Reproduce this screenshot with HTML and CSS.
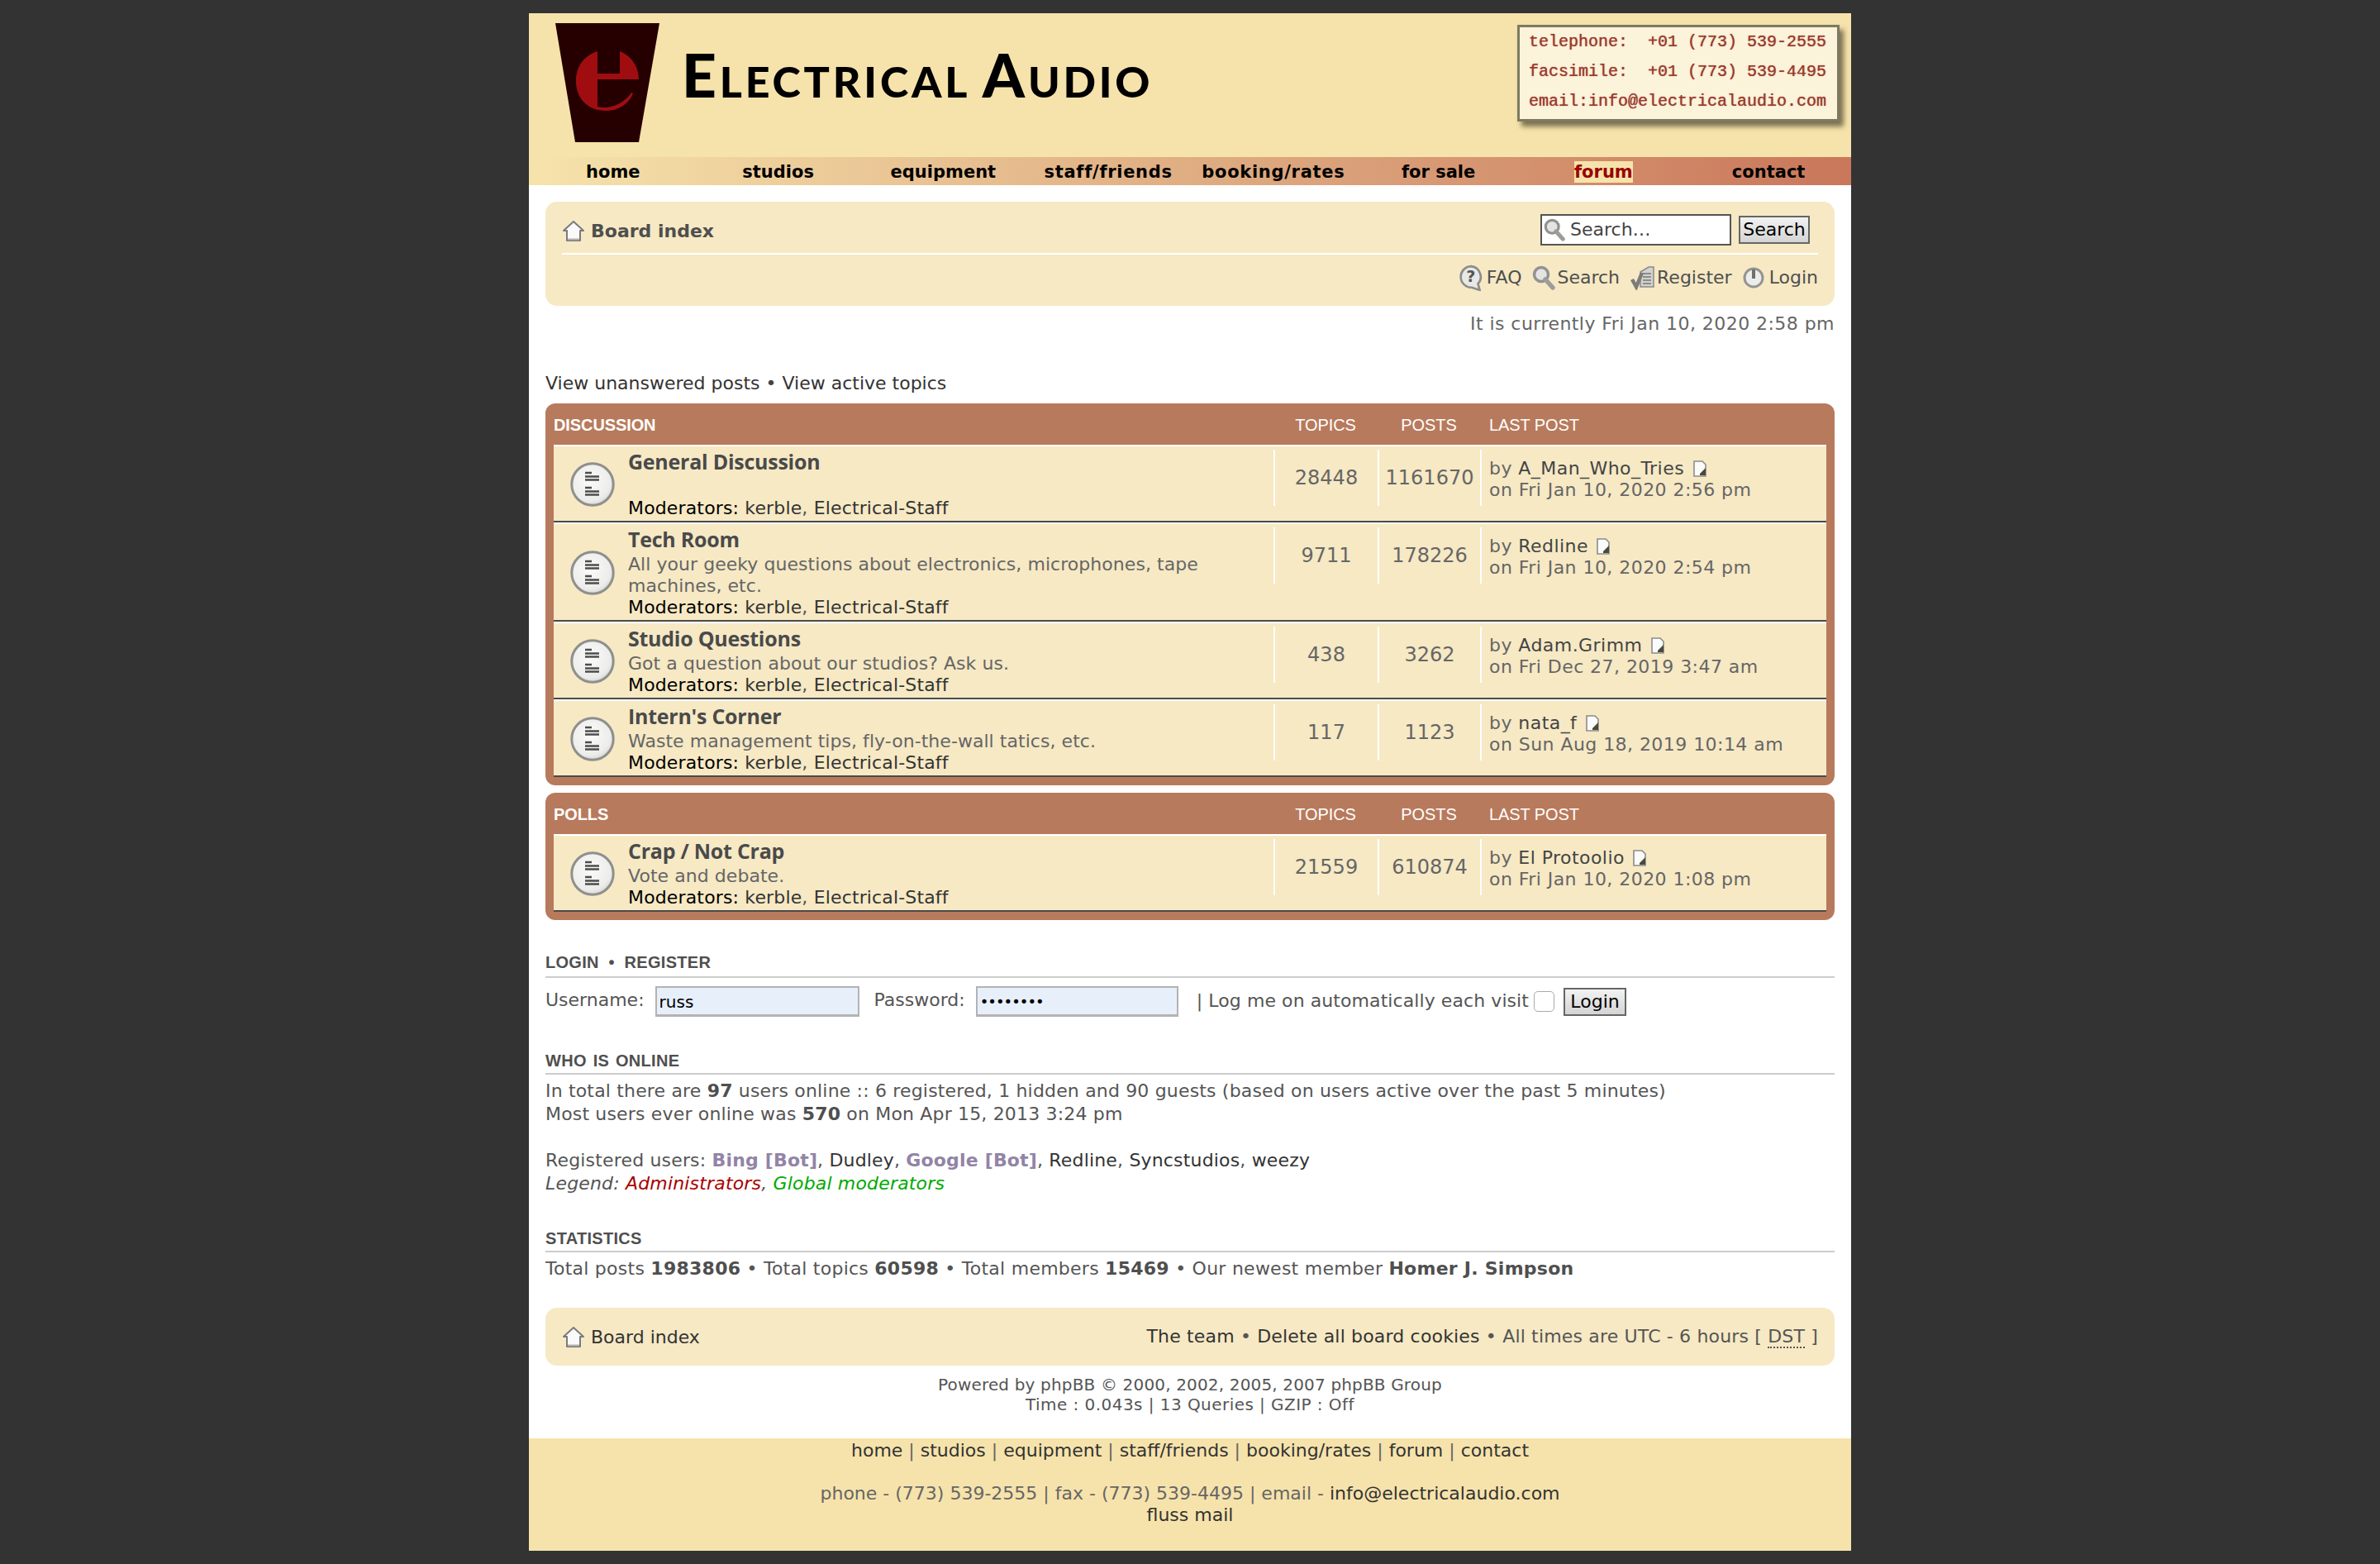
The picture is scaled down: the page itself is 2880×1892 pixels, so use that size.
FILE: index.html
```html
<!DOCTYPE html>
<html lang="en">
<head>
  <meta charset="UTF-8">
  <title>Electrical Audio - Board index</title>
  <link rel="stylesheet" href="styles.css">
</head>
<body>

  <!-- icons used more than once -->
  <svg class="defs" width="0" height="0">
    <defs>
      <radialGradient id="g-forum" cx="45%" cy="40%" r="65%">
        <stop offset="0" stop-color="#fbfbfb"/>
        <stop offset="0.75" stop-color="#ececea"/>
        <stop offset="1" stop-color="#cfcfcd"/>
      </radialGradient>
    </defs>
    <symbol id="i-forum" viewBox="0 0 54 54">
      <circle cx="27" cy="27" r="25.2" fill="url(#g-forum)" stroke="#8f8f8d" stroke-width="3"/>
      <path d="M18 13h8M18 17.5h17M18 21.5h17M18 31h8M18 35.5h17M18 39.5h17" stroke="#4d4d4d" stroke-width="2.4" fill="none"/>
    </symbol>
    <symbol id="i-home" viewBox="0 0 28 26">
      <path d="M14 1 L26 12 L22 12 L22 24 L6 24 L6 12 L2 12 Z" fill="#fafafa" stroke="#7b7b7b" stroke-width="2" stroke-linejoin="round"/>
      <path d="M7 22.5h14" stroke="#b5b5b5" stroke-width="2"/>
    </symbol>
    <symbol id="i-search" viewBox="0 0 28 30">
      <circle cx="11" cy="11" r="8.5" fill="#e4e4e2" stroke="#929290" stroke-width="3.5"/>
      <path d="M16 17 L25 27" stroke="#9c9c9a" stroke-width="5.5" stroke-linecap="round"/>
    </symbol>
    <symbol id="i-last" viewBox="0 0 18 20">
      <path d="M2 1h10l4 4v14H2z" fill="#fbfbfb" stroke="#8c8c8c" stroke-width="1.6"/>
      <path d="M9 16 L16 9 L16 18 L9 18 Z" fill="#4a4a3a"/>
    </symbol>
  </svg>

  <div class="wrap">

    <div class="site-head">
      <svg class="logo" viewBox="0 0 160 170" width="160" height="170">
        <path d="M12 8 H138 L113 152 H36 Z" fill="#260000"/>
        <path d="M63 42 C45 48 37 62 37 78 C37 98 50 114 74 114 C90 114 102 104 106 93 L104 92 C98 102 84 110 72 110 Q66 110 63 109 Z" fill="#a00d10"/>
        <path d="M90 42 C103 47 113 60 113 76 H63 V69 H90 Z" fill="#a00d10"/>
      </svg>
      <div class="site-name"><b>E</b>LECTRICAL <b>A</b>UDIO</div>
      <div class="contact-box">telephone:  +01 (773) 539-2555
facsimile:  +01 (773) 539-4495
email:info@electricalaudio.com</div>
    </div>

    <div class="site-nav">
      <a href="#">home</a>
      <a href="#">studios</a>
      <a href="#">equipment</a>
      <a class="wide" href="#">staff/friends</a>
      <a class="wide" href="#">booking/rates</a>
      <a href="#">for sale</a>
      <a href="#"><span class="current">forum</span></a>
      <a href="#">contact</a>
    </div>

    <div class="content">

      <div class="panel">
        <div class="panel-top">
          <div class="crumb">
            <svg width="28" height="26"><use href="#i-home"/></svg>
            <b>Board index</b>
          </div>
          <div class="search">
            <div class="search-box">
              <svg width="26" height="30"><use href="#i-search"/></svg>
              <span>Search…</span>
            </div>
            <button class="btn">Search</button>
          </div>
        </div>
        <div class="panel-links">
          <a href="#">
            <svg width="32" height="32" viewBox="0 0 30 30">
              <path d="M14 2 A12 12 0 1 0 15 26 L24 29 L22 22 A12 12 0 0 0 14 2 Z" fill="#e8e8e6" stroke="#8d8d8b" stroke-width="2.5"/>
              <text x="14" y="20" class="faq-mark">?</text>
            </svg>FAQ</a>
          <a href="#"><svg width="28" height="30"><use href="#i-search"/></svg>Search</a>
          <a href="#">
            <svg width="30" height="30" viewBox="0 0 30 30">
              <path d="M12 8 L22 2 H28 V26 H12 Z" fill="#d2d2cf" stroke="#8b8b89" stroke-width="1.5"/>
              <path d="M15 10h10M15 14h10M15 18h10M15 22h10" stroke="#777" stroke-width="1.4"/>
              <path d="M2 17 L7 26 L14 9" fill="none" stroke="#7c7c7a" stroke-width="4.5"/>
            </svg>Register</a>
          <a href="#">
            <svg class="power" width="26" height="30" viewBox="0 0 26 30">
              <circle cx="13" cy="15" r="11" fill="#ececea" stroke="#949492" stroke-width="3"/>
              <path d="M13 5v11" stroke="#6f6f6d" stroke-width="4"/>
            </svg>Login</a>
        </div>
      </div>

      <p class="now">It is currently Fri Jan 10, 2020 2:58 pm</p>
      <p class="quick"><a href="#">View unanswered posts</a> • <a href="#">View active topics</a></p>

      <div class="forabg">
        <div class="cols head">
          <div>DISCUSSION</div>
          <div class="num">TOPICS</div>
          <div class="num">POSTS</div>
          <div class="last">LAST POST</div>
        </div>

        <div class="row">
          <svg class="ficon" width="54" height="54"><use href="#i-forum"/></svg>
          <div class="forum">
            <a class="title" href="#">General Discussion</a>
            <div class="desc">&nbsp;</div>
            <div class="mods"><b>Moderators:</b> <a href="#">kerble</a>, <a href="#">Electrical-Staff</a></div>
          </div>
          <div class="stat">28448</div>
          <div class="stat">1161670</div>
          <div class="lastpost">
            <div>by <a href="#">A_Man_Who_Tries</a> <svg width="18" height="20"><use href="#i-last"/></svg></div>
            <div>on Fri Jan 10, 2020 2:56 pm</div>
          </div>
        </div>

        <div class="row">
          <svg class="ficon" width="54" height="54"><use href="#i-forum"/></svg>
          <div class="forum">
            <a class="title" href="#">Tech Room</a>
            <div class="desc">All your geeky questions about electronics, microphones, tape machines, etc.</div>
            <div class="mods"><b>Moderators:</b> <a href="#">kerble</a>, <a href="#">Electrical-Staff</a></div>
          </div>
          <div class="stat">9711</div>
          <div class="stat">178226</div>
          <div class="lastpost">
            <div>by <a href="#">Redline</a> <svg width="18" height="20"><use href="#i-last"/></svg></div>
            <div>on Fri Jan 10, 2020 2:54 pm</div>
          </div>
        </div>

        <div class="row">
          <svg class="ficon" width="54" height="54"><use href="#i-forum"/></svg>
          <div class="forum">
            <a class="title" href="#">Studio Questions</a>
            <div class="desc">Got a question about our studios? Ask us.</div>
            <div class="mods"><b>Moderators:</b> <a href="#">kerble</a>, <a href="#">Electrical-Staff</a></div>
          </div>
          <div class="stat">438</div>
          <div class="stat">3262</div>
          <div class="lastpost">
            <div>by <a href="#">Adam.Grimm</a> <svg width="18" height="20"><use href="#i-last"/></svg></div>
            <div>on Fri Dec 27, 2019 3:47 am</div>
          </div>
        </div>

        <div class="row">
          <svg class="ficon" width="54" height="54"><use href="#i-forum"/></svg>
          <div class="forum">
            <a class="title" href="#">Intern's Corner</a>
            <div class="desc">Waste management tips, fly-on-the-wall tatics, etc.</div>
            <div class="mods"><b>Moderators:</b> <a href="#">kerble</a>, <a href="#">Electrical-Staff</a></div>
          </div>
          <div class="stat">117</div>
          <div class="stat">1123</div>
          <div class="lastpost">
            <div>by <a href="#">nata_f</a> <svg width="18" height="20"><use href="#i-last"/></svg></div>
            <div>on Sun Aug 18, 2019 10:14 am</div>
          </div>
        </div>
      </div>

      <div class="forabg">
        <div class="cols head">
          <div>POLLS</div>
          <div class="num">TOPICS</div>
          <div class="num">POSTS</div>
          <div class="last">LAST POST</div>
        </div>
        <div class="row">
          <svg class="ficon" width="54" height="54"><use href="#i-forum"/></svg>
          <div class="forum">
            <a class="title" href="#">Crap / Not Crap</a>
            <div class="desc">Vote and debate.</div>
            <div class="mods"><b>Moderators:</b> <a href="#">kerble</a>, <a href="#">Electrical-Staff</a></div>
          </div>
          <div class="stat">21559</div>
          <div class="stat">610874</div>
          <div class="lastpost">
            <div>by <a href="#">El Protoolio</a> <svg width="18" height="20"><use href="#i-last"/></svg></div>
            <div>on Fri Jan 10, 2020 1:08 pm</div>
          </div>
        </div>
      </div>

      <h3 class="sec sec-login">LOGIN &nbsp;•&nbsp; REGISTER</h3>
      <div class="login">
        <label>Username:</label>
        <div class="field">russ</div>
        <label class="pw">Password:</label>
        <div class="field dots">••••••••</div>
        <span class="auto">| Log me on automatically each visit</span>
        <span class="check"></span>
        <button class="btn">Login</button>
      </div>

      <h3 class="sec sec-who">WHO IS ONLINE</h3>
      <p class="txt">In total there are <b>97</b> users online :: 6 registered, 1 hidden and 90 guests (based on users active over the past 5 minutes)<br>
      Most users ever online was <b>570</b> on Mon Apr 15, 2013 3:24 pm</p>
      <p class="txt gap">Registered users: <a class="bot" href="#">Bing [Bot]</a>, <a href="#">Dudley</a>, <a class="bot" href="#">Google [Bot]</a>, <a href="#">Redline</a>, <a href="#">Syncstudios</a>, <a href="#">weezy</a><br>
      <em>Legend: <a class="admin" href="#">Administrators</a>, <a class="gmod" href="#">Global moderators</a></em></p>

      <h3 class="sec sec-stats">STATISTICS</h3>
      <p class="txt totals">Total posts <b>1983806</b> • Total topics <b>60598</b> • Total members <b>15469</b> • Our newest member <b>Homer J. Simpson</b></p>

      <div class="panel panel-foot">
        <div class="crumb">
          <svg width="28" height="26"><use href="#i-home"/></svg>
          <a href="#">Board index</a>
        </div>
        <div class="foot-links"><a href="#">The team</a> • <a href="#">Delete all board cookies</a> • All times are UTC - 6 hours [ <abbr>DST</abbr> ]</div>
      </div>

      <div class="powered">Powered by phpBB © 2000, 2002, 2005, 2007 phpBB Group<br><span class="timing">Time : 0.043s | 13 Queries | GZIP : Off</span></div>
    </div>

    <div class="site-foot">
      <div><a href="#">home</a> | <a href="#">studios</a> | <a href="#">equipment</a> | <a href="#">staff/friends</a> | <a href="#">booking/rates</a> | <a href="#">forum</a> | <a href="#">contact</a></div>
      <br>
      <div>phone - (773) 539-2555 | fax - (773) 539-4495 | email - <a href="#">info@electricalaudio.com</a></div>
      <div><a href="#">fluss mail</a></div>
    </div>

  </div>

</body>
</html>
```

FILE: styles.css
```css
* { box-sizing: border-box; margin: 0; padding: 0; }

body {
  background: #333;
  font-family: "DejaVu Sans", Verdana, sans-serif;
  font-size: 22px;
  line-height: 26px;
  color: #555;
}

a { color: #333; text-decoration: none; }
svg { flex: none; }
.defs { position: absolute; }

.wrap {
  width: 1600px;
  margin: 16px auto;
  background: #fff;
}

/* site header */
.site-head {
  height: 174px;
  background: #f6e3ab;
  display: flex;
  align-items: flex-start;
}
.logo { margin: 4px 0 0 20px; }
.site-name {
  margin: 28px 0 0 5px;
  font-family: Lato, "Liberation Sans", sans-serif;
  font-weight: 900;
  font-size: 52px;
  line-height: 92px;
  letter-spacing: 3.8px;
  color: #000;
  white-space: nowrap;
}
.site-name b { font-size: 73px; font-weight: 900; }
.contact-box {
  margin: 14px 14px 0 auto;
  width: 390px;
  height: 117px;
  padding: 0 11px;
  background: #fbf3da;
  border: 3px solid #7d7a60;
  box-shadow: 5px 6px 6px rgba(70, 65, 40, 0.7);
  font-family: "Liberation Mono", monospace;
  font-size: 20px;
  line-height: 36px;
  color: #9c3a30;
  text-shadow: 0 0 1px #a04a42;
  white-space: pre;
}

.site-nav {
  height: 34px;
  display: grid;
  grid-template-columns: repeat(8, 1fr);
  background: linear-gradient(90deg, #f6e3ab, #c9775a);
  font-weight: bold;
  font-size: 21px;
  line-height: 36px;
  text-align: center;
  padding-left: 2px;
}
.site-nav a { color: #000; }
.site-nav .wide { letter-spacing: 0.7px; }
.site-nav .current {
  display: inline-block;
  background: #f6e3ab;
  color: #900;
  line-height: 26px;
}

.content { padding: 20px 20px 0; height: 1516px; }

/* top panel */
.panel {
  background: #f6e9c4;
  border-radius: 14px;
  padding: 0 20px;
}
.panel-top {
  height: 62px;
  display: flex;
  justify-content: space-between;
  align-items: center;
  padding-top: 4px;
}
.crumb { display: flex; align-items: center; gap: 7px; padding-top: 6px; }
.crumb b { color: #4f4f4f; }
.search { display: flex; align-items: center; gap: 9px; margin-right: 10px; margin-top: 2px; }
.search-box {
  width: 231px;
  height: 38px;
  border: 2px solid #555;
  background: #fff;
  color: #444;
  display: flex;
  align-items: center;
  gap: 6px;
  padding-left: 2px;
}
.btn {
  background: linear-gradient(#f2f2f2, #d4d4d4);
  border: 2px solid #666;
  font: inherit;
  color: #000;
  width: 86px;
  height: 34px;
  line-height: 30px;
}
.panel-links {
  height: 64px;
  padding-bottom: 6px;
  border-top: 2px solid #fff;
  display: flex;
  justify-content: flex-end;
  align-items: center;
  gap: 13px;
  color: #4f4f4f;
}
.panel-links a { display: flex; align-items: center; gap: 2px; color: #4f4f4f; }
.power { margin-right: 4px; }
.faq-mark { font-size: 18px; font-weight: bold; fill: #555; text-anchor: middle; }

.now { margin-top: 9px; text-align: right; color: #666; letter-spacing: 0.45px; }
.quick { margin-top: 46px; color: #444; }

/* forum blocks */
.forabg {
  margin-top: 11px;
  background: #b87a5c;
  border-radius: 12px;
  padding: 0 10px 10px;
}
.forabg + .forabg { margin-top: 9px; }

.cols, .row {
  display: grid;
  grid-template-columns: 871px 126px 124px 1fr;
}
.head {
  height: 50px;
  align-items: center;
  font-family: "Liberation Sans", Arial, sans-serif;
  font-size: 20px;
  color: #fff;
  letter-spacing: -0.1px;
  padding-top: 2px;
}
.head div:first-child { font-weight: bold; }
.head .num { text-align: center; }
.head .last { padding-left: 11px; }

.row {
  grid-template-columns: 90px 781px 126px 124px 1fr;
  background: #f6e9c4;
  border-top: 2px solid #fff;
  border-bottom: 2px solid #4a4a4a;
  padding: 4px 0 2px;
  align-items: start;
}
.ficon { align-self: center; margin-left: 20px; }
.title {
  display: block;
  font-family: "Open Sans", sans-serif;
  font-weight: 700;
  font-size: 25px;
  line-height: 28px;
  letter-spacing: -0.25px;
  margin-bottom: 4px;
  color: #4a4a4a;
}
.desc { color: #666; padding-right: 60px; letter-spacing: 0.05px; }
.mods { letter-spacing: 0.15px; }
.mods b { font-weight: normal; color: #000; }
.stat, .lastpost {
  height: 68px;
  border-left: 2px solid #fff;
  display: flex;
  align-items: center;
}
.stat { justify-content: center; color: #666; font-size: 24px; }
.lastpost { display: block; padding: 10px 0 0 9px; color: #666; letter-spacing: 0.45px; }
.lastpost a { color: #444; }
.lastpost svg { vertical-align: -3px; margin-left: 2px; }

/* lower sections */
.sec {
  font-family: "Liberation Sans", Arial, sans-serif;
  font-size: 20px;
  line-height: 26px;
  font-weight: bold;
  color: #4f4f4f;
  letter-spacing: 0.3px;
  word-spacing: 2px;
  height: 30px;
  border-bottom: 2px solid #ccc;
}
.sec-login { margin-top: 40px; line-height: 22px; word-spacing: 0; }
.sec-who { margin-top: 40px; }
.sec-stats { margin-top: 39px; }

.login { display: flex; align-items: center; margin-top: 10px; height: 37px; }
.login label { padding-bottom: 4px; }
.field {
  width: 247px;
  height: 37px;
  margin-left: 13px;
  background: #e7effb;
  border: 2px solid #b3b3b3;
  border-bottom-width: 3px;
  padding: 4px 3px 0;
  color: #000;
  font-size: 20px;
}
.dots { width: 245px; font-size: 18px; letter-spacing: -1px; }
.pw { margin-left: 18px; }
.auto { margin-left: 22px; letter-spacing: 0.08px; padding-bottom: 2px; }
.check {
  width: 25px;
  height: 25px;
  margin-left: 6px;
  background: #fff;
  border: 1px solid #aaa;
  border-radius: 5px;
}
.login .btn { margin-left: 11px; height: 34px; width: 76px; }

.txt { margin-top: 6px; line-height: 28px; letter-spacing: 0.17px; }
.txt.gap { margin-top: 28px; }
.txt.totals { letter-spacing: 0.25px; }
.txt b { color: #4f4f4f; }
.txt .bot { color: #9284a6; font-weight: bold; }
.admin { color: #a00; }
.gmod { color: #0a0; }

.panel-foot {
  margin-top: 33px;
  height: 70px;
  display: flex;
  justify-content: space-between;
  align-items: center;
}
.panel-foot .crumb { padding-top: 2px; }
.foot-links { letter-spacing: 0.17px; }
abbr { border-bottom: 2px dotted #555; }

.powered {
  margin-top: 11px;
  text-align: center;
  font-size: 20px;
  line-height: 24px;
  letter-spacing: 0.16px;
}
.timing { letter-spacing: 0.45px; }

.site-foot {
  background: #f6e3ab;
  height: 136px;
  padding-top: 2px;
  text-align: center;
  color: #666;
}
```
